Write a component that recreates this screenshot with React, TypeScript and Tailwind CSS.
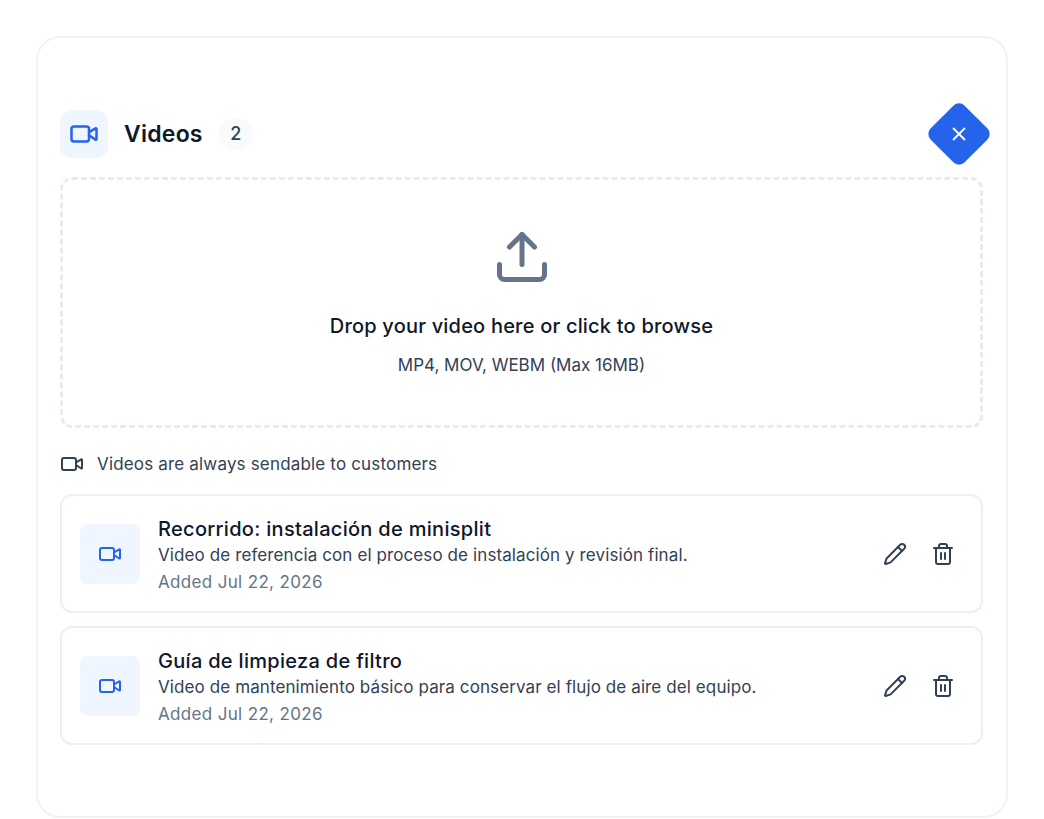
import { Pencil, Trash2, Upload, Video, X } from 'lucide-react';

const VIDEOS = [
  {
    title: 'Recorrido: instalación de minisplit',
    description: 'Video de referencia con el proceso de instalación y revisión final.',
    added: 'Added Jul 22, 2026',
  },
  {
    title: 'Guía de limpieza de filtro',
    description: 'Video de mantenimiento básico para conservar el flujo de aire del equipo.',
    added: 'Added Jul 22, 2026',
  },
];

export default function App() {
  return (
    <div className="w-[1044px] h-[819px] overflow-hidden bg-white pt-[36px] pl-[36px] font-['Inter',sans-serif]">
      <div className="w-[972px] h-[782px] rounded-3xl border-2 border-[#f0f2f5] bg-white pl-[22px] pr-[23px] pt-[72px]">
        {/* Header */}
        <div className="flex h-12 items-center justify-between">
          <div className="flex items-center">
            <div className="flex h-12 w-12 items-center justify-center rounded-xl bg-[#eff6ff]">
              <Video size={30} strokeWidth={2} className="text-[#2563eb]" />
            </div>
            <h2 className="ml-4 text-[23px] font-semibold tracking-[0.01em] text-[#0f172a]">Videos</h2>
            <span className="ml-4 flex h-8 w-[34px] items-center justify-center rounded-full bg-[#f8fafc] text-lg font-medium text-[#334155]">
              2
            </span>
          </div>
          <button className="flex h-12 w-12 rotate-45 items-center justify-center rounded-lg bg-[#2563eb]">
            <X size={22} strokeWidth={2} className="-rotate-45 text-white" />
          </button>
        </div>

        {/* Dropzone */}
        <div className="mt-[19px] flex h-[251px] flex-col items-center rounded-xl border-[3px] border-dashed border-[#e8ecf1] pt-[47px]">
          <Upload size={60} strokeWidth={2} className="text-[#64748b]" />
          <p className="mt-[25px] text-xl font-medium tracking-[0.01em] text-[#0f172a]">Drop your video here or click to browse</p>
          <p className="mt-[13px] text-[17px] leading-6 text-[#334155]">MP4, MOV, WEBM (Max 16MB)</p>
        </div>

        {/* Note */}
        <div className="mt-[25px] flex h-6 items-center gap-[13px]">
          <Video size={24} strokeWidth={2} className="mb-[2px] text-[#334155]" />
          <span className="text-[17px] tracking-[0.01em] text-[#334155]">Videos are always sendable to customers</span>
        </div>

        {/* Video list */}
        <div className="mt-[17px] flex flex-col gap-[13px]">
          {VIDEOS.map((video) => (
            <div
              key={video.title}
              className="flex h-[119px] items-center rounded-xl border-2 border-[#edf0f3] bg-white pl-[18px] pr-[26px]"
            >
              <div className="mt-px flex h-[60px] w-[60px] items-center justify-center rounded-lg bg-[#eff6ff]">
                <Video size={24} strokeWidth={2} className="text-[#2563eb]" />
              </div>
              <div className="ml-[18px] flex-1 pt-1">
                <h3 className="text-xl leading-[26px] font-medium tracking-[0.015em] text-[#0f172a]">{video.title}</h3>
                <p className="text-[17px] leading-[26px] tracking-[0.006em] text-[#334155]">{video.description}</p>
                <p className="mt-px text-[17px] leading-[26px] tracking-[0.02em] text-[#64748b]">{video.added}</p>
              </div>
              <div className="flex items-center gap-6">
                <Pencil size={24} strokeWidth={2} className="text-[#334155]" />
                <Trash2 size={24} strokeWidth={2} className="text-[#334155]" />
              </div>
            </div>
          ))}
        </div>
      </div>
    </div>
  );
}
